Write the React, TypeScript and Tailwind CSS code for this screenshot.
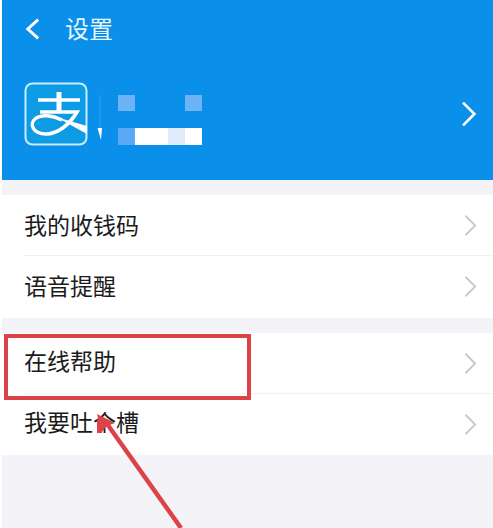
const font = { fontFamily: '"Noto Sans CJK SC", sans-serif' };

function Chevron({ className, width = 2 }: { className: string; width?: number }) {
  return (
    <svg viewBox="0 0 14 24" className={className} fill="none" stroke="currentColor" strokeWidth={width}>
      <path d="M1.5 1.5 L12 12 L1.5 22.5" />
    </svg>
  );
}

function Row({ label, last, textClass }: { label: string; last?: boolean; textClass: string }) {
  return (
    <div className="flex items-center h-[61px] pl-[22px] pr-[16px] relative">
      <span className={`text-[23px] leading-none text-[#1b1b1b] flex-1 ${textClass}`}>{label}</span>
      <Chevron className="w-[13px] h-[23px] text-[#c8c8cc]" />
      {!last && <div className="absolute left-[22px] right-0 bottom-0 h-px bg-[#f1f1f3]" />}
    </div>
  );
}

export default function App() {
  return (
    <div className="w-[493px] h-[528px] overflow-hidden bg-white relative pl-[2px]" style={font}>
      <div className="bg-[#0a8feb] h-[180px] flex flex-col">
        <div className="flex items-center h-[58px] pl-[23px] text-white">
          <svg viewBox="0 0 16 24" className="w-[15px] h-[24px]" fill="none" stroke="currentColor" strokeWidth="3.2">
            <path d="M14 2 L3 12 L14 22" />
          </svg>
          <span className="ml-[25px] text-[24px] leading-none -mt-[3px] text-[#e8f4fe]">设置</span>
        </div>
        <div className="flex items-center mt-[24px] h-[64px] pl-[22px] pr-[16px]">
          <svg viewBox="0 0 64 64" className="w-[64px] h-[64px] shrink-0">
            <rect x="1.5" y="1.5" width="61" height="61" rx="7" fill="#0e9be6" stroke="#c9ecfb" strokeWidth="2" />
            <g fill="none" stroke="#fff" strokeWidth="3.5">
              <path d="M14 18 H56" />
              <path d="M35 10 V30" strokeWidth="5" />
              <path d="M16 30 H53 C46 42 34 52 22 52 C9 52 5 42 11 37 C17 32 28 33 38 38" />
            </g>
            <path d="M32 35 L63 44 V52 Z" fill="#fff" />
          </svg>
          <svg viewBox="0 0 6 46" className="w-[6px] h-[46px] ml-[8px] mt-[7px] shrink-0">
            <path d="M4 0 V33" stroke="#1a9bec" strokeWidth="2" />
            <path d="M1.5 33 L6 33 L5 45 Z" fill="#fff" />
          </svg>
          <div className="ml-[16px] mt-[11px] flex flex-col gap-[17px] w-[84px]">
            <div className="flex justify-between">
              <div className="w-[17px] h-[16px] bg-[#6db4f6]" />
              <div className="w-[17px] h-[16px] bg-[#6db4f6]" />
            </div>
            <div className="flex h-[17px]">
              <div className="w-[17px] bg-[#5aa9f5]" />
              <div className="w-[33px] bg-white" />
              <div className="w-[17px] bg-[#dfebfb]" />
              <div className="w-[17px] bg-white" />
            </div>
          </div>
          <div className="flex-1" />
          <Chevron className="w-[16px] h-[26px] text-white" width={2.4} />
        </div>
      </div>

      <div className="h-[15px] bg-[#f3f3f8]" />
      <div className="bg-white h-[123px]">
        <Row label="我的收钱码" textClass="-mt-[2px]" />
        <Row label="语音提醒" last textClass="-mt-[2px]" />
      </div>
      <div className="h-[15px] bg-[#f3f3f8]" />
      <div className="bg-white h-[122px]">
        <Row label="在线帮助" textClass="-mt-[7px]" />
        <Row label="我要吐个槽" last textClass="-mt-[7px]" />
      </div>
      <div className="h-[73px] bg-[#f3f3f8]" />

      <div className="absolute left-[4px] top-[334px] w-[247px] h-[66px] border-[4px] border-[#dc4349]" />
      <svg className="absolute left-0 top-0 w-[493px] h-[528px] pointer-events-none" viewBox="0 0 493 528">
        <path d="M181 528 L105 421" stroke="#dc4349" strokeWidth="4.5" fill="none" />
        <path d="M97 414 L115 423 L107 426 L101 433 Z" fill="#dc4349" />
        <path d="M99.5 420 V433" stroke="#dc4349" strokeWidth="5" />
      </svg>
    </div>
  );
}
